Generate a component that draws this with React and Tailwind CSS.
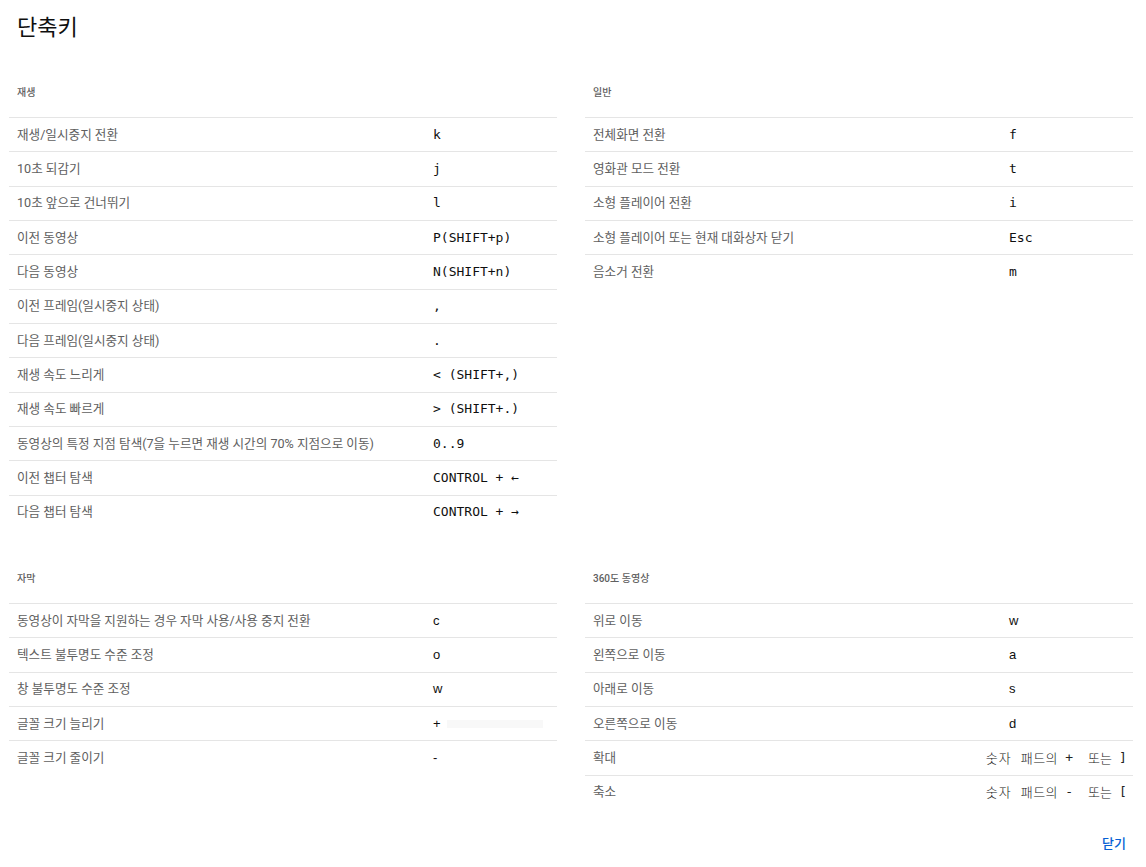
import React from "react";

const SANS = "font-[family-name:Roboto,'Noto_Sans_CJK_KR',sans-serif]";
const MONO = "font-[family-name:'DejaVu_Sans_Mono','Noto_Sans_CJK_KR',monospace]";
const PLAIN = "font-[family-name:'Liberation_Sans',Arial,'Noto_Sans_CJK_KR',sans-serif]";
const KR = "font-[family-name:'Noto_Sans_CJK_KR',sans-serif]";

const sections = [
  {
    title: "재생",
    rows: [
      ["재생/일시중지 전환", "k"],
      ["10초 되감기", "j"],
      ["10초 앞으로 건너뛰기", "l"],
      ["이전 동영상", "P(SHIFT+p)"],
      ["다음 동영상", "N(SHIFT+n)"],
      ["이전 프레임(일시중지 상태)", ","],
      ["다음 프레임(일시중지 상태)", "."],
      ["재생 속도 느리게", "< (SHIFT+,)"],
      ["재생 속도 빠르게", "> (SHIFT+.)"],
      ["동영상의 특정 지점 탐색(7을 누르면 재생 시간의 70% 지점으로 이동)", "0..9"],
      ["이전 챕터 탐색", "CONTROL + ←"],
      ["다음 챕터 탐색", "CONTROL + →"],
    ],
  },
  {
    title: "일반",
    rows: [
      ["전체화면 전환", "f"],
      ["영화관 모드 전환", "t"],
      ["소형 플레이어 전환", "i"],
      ["소형 플레이어 또는 현재 대화상자 닫기", "Esc"],
      ["음소거 전환", "m"],
    ],
  },
  {
    title: "자막",
    plainKeys: true,
    rows: [
      ["동영상이 자막을 지원하는 경우 자막 사용/사용 중지 전환", "c"],
      ["텍스트 불투명도 수준 조정", "o"],
      ["창 불투명도 수준 조정", "w"],
      ["글꼴 크기 늘리기", "+", "bar"],
      ["글꼴 크기 줄이기", "-"],
    ],
  },
  {
    title: "360도 동영상",
    plainKeys: true,
    rows: [
      ["위로 이동", "w"],
      ["왼쪽으로 이동", "a"],
      ["아래로 이동", "s"],
      ["오른쪽으로 이동", "d"],
      ["확대", ["+", "]"], "wide"],
      ["축소", ["-", "["], "wide"],
    ],
  },
];

function WideKey({ sym }) {
  return (
    <div className="flex-1 min-w-0 flex justify-end items-center pr-[6px] text-[13px] leading-[16px] text-[#222] whitespace-pre">
      <div className="flex items-center shrink-0">
        <span className={`font-light tracking-[1px] ${KR}`}>숫자</span>
        <span className={`ml-[9px] font-light tracking-[0.5px] ${KR}`}>패드의</span>
        <span className={`ml-[7px] w-[8px] text-center ${MONO}`}>{sym[0]}</span>
        <span className={`ml-[15px] font-light ${KR}`}>또는</span>
        <span className={`ml-[7px] w-[8px] text-center ${MONO}`}>{sym[1]}</span>
      </div>
    </div>
  );
}

function Section({ s }) {
  return (
    <div className="flex flex-col">
      <div
        className={`h-[50px] pt-[18px] pl-[8px] text-[10px] leading-[16px] font-medium text-[#606060] ${SANS}`}
      >
        {s.title}
      </div>
      {s.rows.map(([desc, key, kind], i) => (
        <div
          key={i}
          className="flex h-[34.33px] items-center border-t border-[#e5e5e5]"
        >
          <div
            className={`w-[424px] shrink-0 pl-[8px] text-[12.6px] leading-[16px] text-[#606060] whitespace-nowrap ${SANS}`}
          >
            {desc}
          </div>
          {kind === "wide" ? (
            <WideKey sym={key} />
          ) : (
            <div
              className={`flex-1 min-w-0 flex items-center text-[13px] leading-[16px] text-[#0f0f0f] whitespace-pre ${
                s.plainKeys ? PLAIN : MONO
              }`}
            >
              {key}
              {kind === "bar" && (
                <span className="ml-[6px] inline-block h-[8px] w-[96px] bg-[#f8f8f8]" />
              )}
            </div>
          )}
        </div>
      ))}
    </div>
  );
}

export default function App() {
  return (
    <div className={`w-[1146px] h-[867px] bg-white overflow-hidden ${SANS}`}>
      <div className="h-[67px] pl-[17px] pt-[13px]">
        <h1 className={`text-[22px] leading-[30px] font-normal text-[#0f0f0f] ${SANS}`}>
          단축키
        </h1>
      </div>
      <div className="grid grid-cols-2 gap-x-[28px] gap-y-[24px] pl-[9px] pr-[13px]">
        {sections.map((s) => (
          <Section key={s.title} s={s} />
        ))}
      </div>
      <div className="flex justify-end pr-[20px] mt-[17px]">
        <button
          className={`h-[36px] text-[13px] font-medium text-[#065fd4] leading-[36px] ${SANS}`}
        >
          닫기
        </button>
      </div>
    </div>
  );
}
